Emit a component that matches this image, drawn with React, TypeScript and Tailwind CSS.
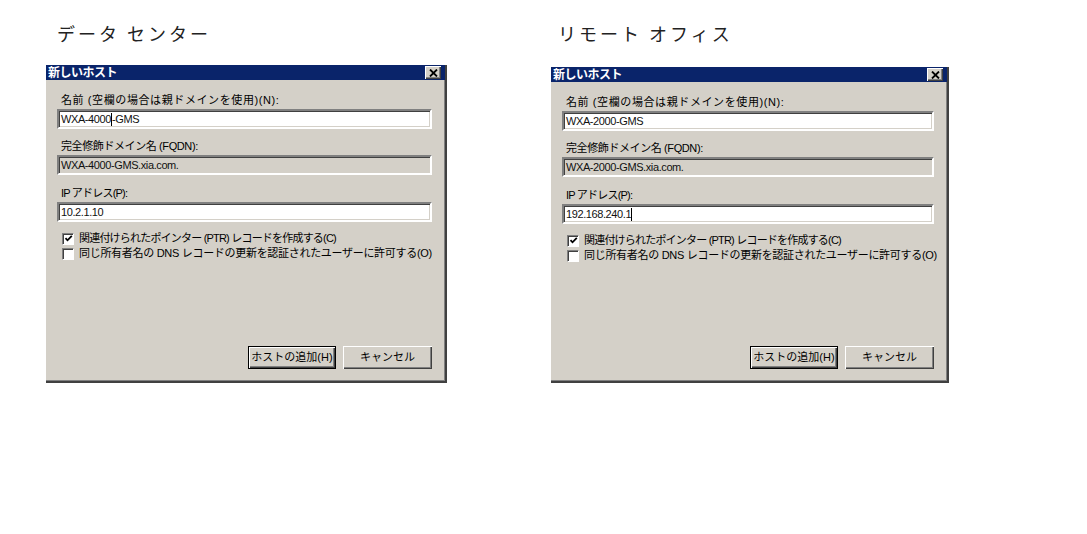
import React from 'react';

type DialogProps = {
  name: React.ReactNode;
  fqdn: string;
  ip: React.ReactNode;
  className?: string;
};

const Caret = () => <span className="inline-block w-px h-[13px] bg-black align-[-2px]" />;

function Field({ children, readOnly }: { children: React.ReactNode; readOnly?: boolean }) {
  return (
    <div
      className={`h-[20px] border-2 border-t-[#808080] border-l-[#808080] border-b-white border-r-white shadow-[inset_1px_1px_0_#404040,inset_-1px_-1px_0_#d4d0c8] pl-[2px] flex items-center text-[11px] leading-none tracking-[-0.4px] font-['Liberation_Sans','Noto_Sans_CJK_JP',sans-serif] text-[#111] ${
        readOnly ? 'bg-[#d4d0c8]' : 'bg-white'
      }`}
    >
      {children}
    </div>
  );
}

function Checkbox({ checked, label, track }: { checked?: boolean; label: string; track: string }) {
  return (
    <div className="flex items-center h-[15px] pl-[5px] gap-[5px]">
      <div className="shrink-0 w-[12px] h-[12px] bg-white border border-t-[#808080] border-l-[#808080] border-b-white border-r-white shadow-[inset_1px_1px_0_#404040] flex items-center justify-center">
        {checked && (
          <svg width="9" height="9" viewBox="0 0 9 9">
            <path d="M1.5 4.2 L3.5 6.3 L7.8 1.8" stroke="#000" strokeWidth="1.8" fill="none" />
          </svg>
        )}
      </div>
      <span className={`text-[11px] leading-none whitespace-nowrap ${track}`}>{label}</span>
    </div>
  );
}

function Dialog({ name, fqdn, ip, className }: DialogProps) {
  return (
    <div
      className={`flex flex-col bg-[#d4d0c8] border-r-2 border-b-2 border-r-[#404040] border-b-[#404040] shadow-[inset_-1px_-1px_0_#808080] text-black font-['Liberation_Sans','Noto_Sans_CJK_JP',sans-serif] ${className}`}
    >
      <div className="h-[15px] bg-[#0a246a] flex items-center justify-between pl-[2px] pr-[4px]">
        <span className="text-white text-[12px] font-bold leading-none tracking-[-0.5px]">新しいホスト</span>
        <div className="w-[16px] h-[13px] bg-[#d4d0c8] shadow-[inset_1px_1px_0_#fff,inset_-1px_-1px_0_#404040,inset_-2px_-2px_0_#808080] flex items-center justify-center">
          <svg width="9" height="8" viewBox="0 0 9 8">
            <path d="M1 0.5 L8 7.5 M8 0.5 L1 7.5" stroke="#000" strokeWidth="1.8" />
          </svg>
        </div>
      </div>
      <div className="flex flex-col flex-1 pl-[11px] pr-[13px] pt-[13px] pb-[12px]">
        <div className="h-[14px] pl-[4px] text-[11px] leading-[14px] tracking-[0.6px] whitespace-nowrap">名前 (空欄の場合は親ドメインを使用)(N):</div>
        <div className="mt-[2px]">
          <Field>{name}</Field>
        </div>
        <div className="mt-[10px] h-[14px] pl-[4px] text-[11px] leading-[14px] tracking-[-0.4px] whitespace-nowrap">完全修飾ドメイン名 (FQDN):</div>
        <div className="mt-[2px]">
          <Field readOnly>{fqdn}</Field>
        </div>
        <div className="mt-[11px] h-[14px] pl-[4px] text-[11px] leading-[14px] tracking-[-0.8px] whitespace-nowrap">IP アドレス(P):</div>
        <div className="mt-[2px]">
          <Field>{ip}</Field>
        </div>
        <div className="mt-[9px] flex flex-col">
          <Checkbox checked label="関連付けられたポインター (PTR) レコードを作成する(C)" track="tracking-[-0.8px]" />
          <Checkbox label="同じ所有者名の DNS レコードの更新を認証されたユーザーに許可する(O)" track="tracking-[-0.3px]" />
        </div>
        <div className="mt-auto flex justify-end gap-[7px]">
          <button className="w-[88px] h-[23px] border border-black bg-[#d4d0c8] shadow-[inset_1px_1px_0_#fff,inset_-1px_-1px_0_#404040,inset_-2px_-2px_0_#808080] text-[11px] leading-none">
            ホストの追加(H)
          </button>
          <button className="w-[89px] h-[23px] bg-[#d4d0c8] shadow-[inset_1px_1px_0_#fff,inset_-1px_-1px_0_#404040,inset_-2px_-2px_0_#808080] text-[11px] leading-none">
            キャンセル
          </button>
        </div>
      </div>
    </div>
  );
}

export default function App() {
  return (
    <div className="w-[1087px] h-[534px] bg-white flex items-start pl-[46px] gap-[104px]">
      <div className="flex flex-col">
        <h2 className="pt-[21px] h-[65px] pl-[11px] text-[18px] leading-[24px] tracking-[3px] text-[#222] font-['Noto_Sans_CJK_JP',sans-serif] font-normal">
          データ センター
        </h2>
        <Dialog
          className="w-[401px] h-[318px]"
          name={
            <>
              WXA-4000
              <Caret />
              -GMS
            </>
          }
          fqdn="WXA-4000-GMS.xia.com."
          ip="10.2.1.10"
        />
      </div>
      <div className="flex flex-col">
        <h2 className="pt-[21px] h-[67px] pl-[7px] text-[18px] leading-[24px] tracking-[3px] text-[#222] font-['Noto_Sans_CJK_JP',sans-serif] font-normal">
          リモート オフィス
        </h2>
        <Dialog
          className="w-[398px] h-[316px]"
          name="WXA-2000-GMS"
          fqdn="WXA-2000-GMS.xia.com."
          ip={
            <>
              192.168.240.1
              <Caret />
            </>
          }
        />
      </div>
    </div>
  );
}
